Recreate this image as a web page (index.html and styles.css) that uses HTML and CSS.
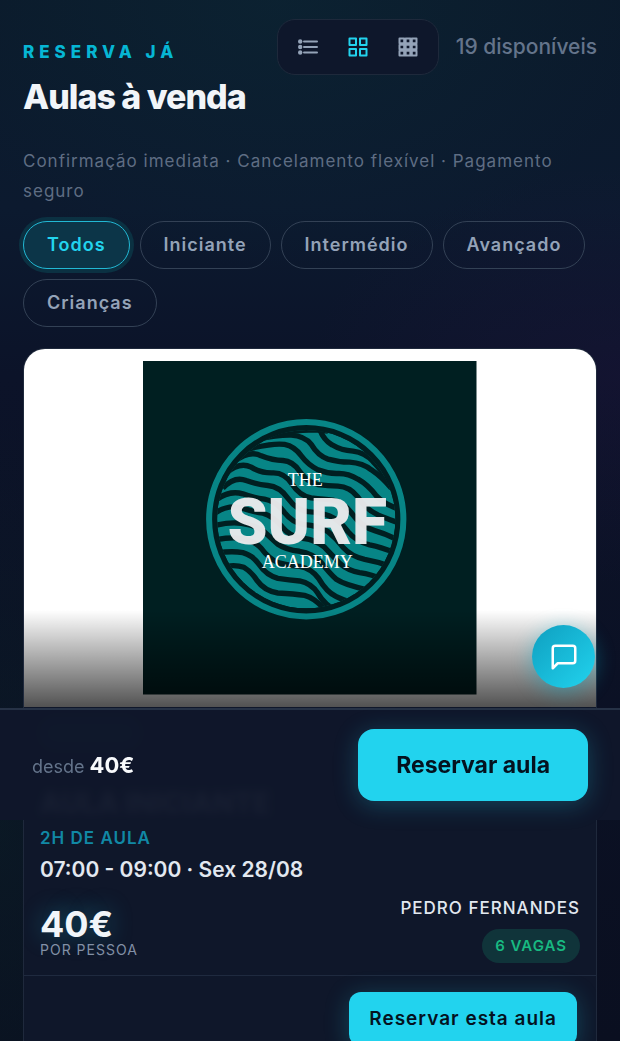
FILE: index.html
```html
<!DOCTYPE html>
<html lang="pt">
<head>
<meta charset="utf-8">
<meta name="viewport" content="width=device-width, initial-scale=1">
<title>Aulas à venda</title>
<link rel="stylesheet" href="styles.css">
</head>
<body>
<main class="page">
  <header class="header">
    <div class="heading">
      <p class="eyebrow">Reserva já</p>
      <h1 class="title">Aulas à venda</h1>
    </div>
    <div class="tools">
      <div class="views" role="group" aria-label="Vista">
        <button class="view" type="button" aria-label="Lista">
          <svg width="20" height="20" viewBox="0 0 20 20" fill="none" stroke="currentColor" stroke-width="2" stroke-linecap="round"><path d="M6 4.500h13M6 10h13M6 15.500h13"/><g fill="currentColor" stroke="none"><circle cx="2.200" cy="4.500" r="2.200"/><circle cx="2.200" cy="10" r="2.200"/><circle cx="2.200" cy="15.500" r="2.200"/></g></svg>
        </button>
        <button class="view view-active" type="button" aria-label="Grelha" aria-pressed="true">
          <svg width="20" height="20" viewBox="0 0 20 20" fill="none" stroke="currentColor" stroke-width="2" stroke-linejoin="round"><path d="M1.500 1.500h6.500v6.500h-6.500zM12 1.500h6.500v6.500h-6.500zM1.500 12h6.500v6.500h-6.500zM12 12h6.500v6.500h-6.500z"/></svg>
        </button>
        <button class="view" type="button" aria-label="Compacta">
          <svg width="20" height="20" viewBox="0 0 20 20" fill="none" stroke="currentColor" stroke-width="2" stroke-linejoin="round"><path d="M1.500 1.500h4.700v4.700h-4.700zM7.650 1.500h4.700v4.700h-4.700zM13.800 1.500h4.700v4.700h-4.700zM1.500 7.650h4.700v4.700h-4.700zM7.650 7.650h4.700v4.700h-4.700zM13.800 7.650h4.700v4.700h-4.700zM1.500 13.800h4.700v4.700h-4.700zM7.650 13.800h4.700v4.700h-4.700zM13.800 13.800h4.700v4.700h-4.700z"/></svg>
        </button>
      </div>
      <span class="count">19 disponíveis</span>
    </div>
  </header>
  <p class="lead">Confirmação imediata · Cancelamento flexível · Pagamento seguro</p>
  <div class="chips" role="group" aria-label="Nível">
    <button class="chip chip-active" type="button" aria-pressed="true">Todos</button>
    <button class="chip" type="button">Iniciante</button>
    <button class="chip" type="button">Intermédio</button>
    <button class="chip" type="button">Avançado</button>
    <button class="chip" type="button">Crianças</button>
  </div>
  <article class="card">
    <div class="cover">
      <svg class="logo" viewBox="0 0 333 333" role="img" aria-label="The Surf Academy">
        <defs>
          <clipPath id="disc"><circle cx="335" cy="328" r="267"/></clipPath>
        </defs>
        <rect width="333" height="333" fill="#001f21"/>
        <g transform="translate(163 158)">
          <circle r="97" fill="none" stroke="#078586" stroke-width="6"/>
          <g transform="scale(.3333) translate(-335 -328)" clip-path="url(#disc)">
            <circle cx="335" cy="328" r="267" fill="#078586"/>
            <g fill="none" stroke="#001f21" stroke-width="16">
              <path d="M200 82Q230 72 280 66Q325 60 362 60Q385 62 400 64"/>
              <path d="M372 50Q385 90 412 105Q440 122 475 124Q510 128 535 155Q560 180 590 225"/>
              <path d="M190 88Q250 75 290 76Q330 78 350 104Q370 138 400 148Q430 157 465 157Q505 160 530 180Q560 200 590 235"/>
              <path d="M150 120Q240 98 270 104Q300 110 320 138Q340 165 370 180Q400 192 430 191Q460 190 490 208Q520 225 545 258Q570 285 620 300"/>
              <path d="M120 155Q165 120 200 138Q235 152 265 152Q295 154 315 184Q335 215 370 224Q400 228 430 229Q465 230 490 262Q515 300 550 315Q575 325 620 342"/>
              <path d="M95 190Q135 155 170 172Q200 190 235 189Q270 188 292 222Q315 258 350 264Q390 268 415 271Q450 280 475 315Q500 350 540 362Q575 372 610 390"/>
              <path d="M85 235Q120 198 155 212Q190 225 220 227Q255 230 280 265Q305 300 340 305Q380 308 405 318Q435 330 460 365Q485 395 525 405Q560 412 610 432"/>
              <path d="M65 270Q105 240 145 252Q180 265 210 268Q245 274 270 308Q295 340 330 344Q370 347 400 365Q425 385 445 412Q470 440 510 448Q550 455 590 470"/>
              <path d="M50 318Q95 282 140 294Q175 305 205 310Q235 318 262 350Q285 380 325 385Q365 390 390 412Q415 438 435 460Q460 482 495 488Q530 493 570 510"/>
              <path d="M50 350Q100 335 140 340Q180 345 205 362Q230 385 250 403Q275 420 315 424Q355 430 380 458Q405 490 425 508Q450 525 520 540"/>
              <path d="M50 392Q105 380 145 386Q180 393 200 415Q222 445 250 458Q280 467 315 469Q350 475 372 505Q395 545 425 560Q445 570 480 580"/>
              <path d="M60 430Q110 422 145 428Q175 436 195 465Q215 495 250 505Q285 510 315 513Q350 520 370 550Q390 585 430 605"/>
              <path d="M80 472Q120 462 148 472Q170 485 188 512Q210 543 250 549Q300 552 330 556Q365 565 400 610"/>
            </g>
          </g>
          <g text-anchor="middle">
            <text class="logo-small" x="-1" y="-33">THE</text>
            <text class="logo-big" x="1" y="25">SURF</text>
            <text class="logo-small" x="1" y="49">ACADEMY</text>
          </g>
        </g>
      </svg>
    </div>
    <div class="body">
      <div class="tags"><span class="tag"></span></div>
      <h2 class="name">Aula iniciante</h2>
      <p class="length">2h de aula</p>
      <p class="time">07:00 - 09:00 · Sex 28/08</p>
      <div class="details">
        <div>
          <p class="price">40€</p>
          <p class="unit">por pessoa</p>
        </div>
        <div class="coach">
          <p class="coach-name">Pedro Fernandes</p>
          <span class="spots">6 vagas</span>
        </div>
      </div>
    </div>
    <footer class="actions">
      <button class="book" type="button">Reservar esta aula</button>
    </footer>
  </article>
</main>
<button class="chat" type="button" aria-label="Abrir conversa">
  <svg width="30" height="30" viewBox="0 0 24 24" fill="none" stroke="currentColor" stroke-width="2" stroke-linecap="round" stroke-linejoin="round"><path d="M21 15a2 2 0 0 1-2 2H7l-4 4V5a2 2 0 0 1 2-2h14a2 2 0 0 1 2 2z"/></svg>
</button>
<aside class="bar">
  <p class="from">desde <strong class="from-price">40€</strong></p>
  <button class="reserve" type="button">Reservar aula</button>
</aside>
</body>
</html>
```
FILE: styles.css
```css
* { box-sizing: border-box; }
body, h1, h2, p { margin: 0; }
button { font: inherit; cursor: pointer; }

body {
  height: 100vh;
  overflow: hidden;
  font-family: Inter, "Liberation Sans", sans-serif;
  color: #f1f5f9;
  background:
    radial-gradient(ellipse 60% 26% at 45% 0, rgba(12, 45, 58, .4), transparent),
    radial-gradient(ellipse 50% 20% at 100% 36%, rgba(26, 20, 56, .5), transparent),
    radial-gradient(ellipse 30% 40% at 0 80%, rgba(10, 32, 38, .5), transparent),
    linear-gradient(#0b1a2b, #0c1a2f 20%, #0c1329 36%, #0a0f20);
}

.page { padding: 19px 23px; }

.header { display: flex; justify-content: space-between; align-items: flex-start; }
.heading { padding-top: 22px; }
.eyebrow {
  font-size: 17px;
  line-height: 22px;
  font-weight: 800;
  letter-spacing: 5px;
  text-transform: uppercase;
  color: #06b6d4;
}
.title {
  margin-top: 12px;
  font-size: 34px;
  line-height: 44px;
  font-weight: 800;
  letter-spacing: -1px;
}
.tools { display: flex; align-items: center; gap: 17px; }
.views {
  display: flex;
  padding: 5px;
  border: 1px solid #1e293b;
  border-radius: 18px;
  background: #0e172b;
}
.view {
  display: grid;
  place-items: center;
  width: 50px;
  height: 44px;
  padding: 0;
  border: 0;
  background: none;
  color: #94a3b8;
}
.view-active { color: #22d3ee; }
.count { font-size: 21px; line-height: 24px; font-weight: 500; color: #64748b; white-space: nowrap; }

.lead {
  margin-top: 27px;
  font-size: 17px;
  line-height: 30px;
  letter-spacing: 1px;
  color: #5f6d83;
}

.chips { display: flex; flex-wrap: wrap; gap: 10px; margin-top: 15px; }
.chip {
  padding: 0 23px;
  border: 1px solid #334155;
  border-radius: 25px;
  background: none;
  font-size: 18px;
  line-height: 46px;
  font-weight: 600;
  letter-spacing: 1px;
  color: #94a3b8;
}
.chip-active {
  border-color: #22b8d4;
  background: #0c3548;
  box-shadow: 0 0 0 4px #0b3142;
  color: #22d3ee;
}

.card {
  margin-top: 21px;
  border: 1px solid #1f293c;
  border-radius: 22px;
  background: #0f172a;
  overflow: hidden;
}
.cover {
  position: relative;
  display: flex;
  justify-content: center;
  aspect-ratio: 8 / 5;
  padding: 12px;
  background: #fff;
}
.cover::after {
  content: "";
  position: absolute;
  inset: 73% 0 0;
  background: linear-gradient(transparent, rgba(0, 0, 0, .68));
}
.logo { height: 100%; }
.logo-small { font: 18px "Liberation Serif", serif; fill: #fff; }
.logo-big { font: 900 64px Roboto, sans-serif; fill: #ebebed; fill-opacity: .96; }

.body { padding: 10px 16px 12px; }
.tags { height: 32px; }
.tag { display: block; width: 100px; height: 32px; border-radius: 16px; background: #0d3a4b; }
.name {
  margin-top: 38px;
  font-size: 28px;
  line-height: 32px;
  font-weight: 800;
  text-transform: uppercase;
}
.length {
  margin-top: 8px;
  font-size: 17px;
  line-height: 22px;
  font-weight: 600;
  letter-spacing: 1px;
  text-transform: uppercase;
  color: #1188a5;
}
.time { margin-top: 8px; font-size: 21px; line-height: 26px; font-weight: 600; color: #e2e8f0; }
.details { display: flex; justify-content: space-between; align-items: flex-end; margin-top: 14px; }
.price {
  font-size: 36px;
  line-height: 34px;
  font-weight: 700;
  text-shadow: 0 0 24px rgba(34, 211, 238, .35);
}
.unit {
  margin-bottom: 4px;
  font-size: 14px;
  line-height: 18px;
  letter-spacing: 1px;
  text-transform: uppercase;
  color: #8290a6;
}
.coach { display: flex; flex-direction: column; align-items: flex-end; gap: 10px; }
.coach-name {
  font-size: 17px;
  line-height: 22px;
  font-weight: 500;
  letter-spacing: 1px;
  text-transform: uppercase;
  color: #e2e8f0;
}
.spots {
  padding: 0 13px;
  border-radius: 17px;
  background: #10343a;
  font-size: 15px;
  line-height: 34px;
  font-weight: 600;
  letter-spacing: 1px;
  text-transform: uppercase;
  color: #18b981;
}
.actions { display: flex; justify-content: flex-end; padding: 16px 19px; border-top: 1px solid #1f2a3f; }
.book, .reserve { border: 0; background: #22d3ee; color: #04121f; box-shadow: 0 4px 24px rgba(34, 211, 238, .25); }
.book {
  padding: 0 20px;
  border-radius: 12px;
  font-size: 19px;
  line-height: 54px;
  font-weight: 600;
  letter-spacing: 1px;
}

.chat {
  position: fixed;
  right: 25px;
  bottom: 353px;
  display: grid;
  place-items: center;
  width: 63px;
  height: 63px;
  padding: 0;
  border: 0;
  border-radius: 50%;
  background: linear-gradient(135deg, #0e9fc0, #22d3ee);
  box-shadow: 0 4px 20px rgba(6, 182, 212, .4);
  color: #fff;
}

.bar {
  position: fixed;
  left: 0;
  right: 0;
  bottom: 221px;
  display: flex;
  justify-content: space-between;
  align-items: center;
  padding: 19px 32px;
  border-top: 2px solid #263246;
  background: rgba(15, 23, 42, .97);
  backdrop-filter: blur(4px);
}
.from { font-size: 18px; color: #64748b; }
.from-price { font-size: 22px; font-weight: 700; color: #f8fafc; }
.reserve { padding: 0 38px; border-radius: 16px; font-size: 23px; line-height: 72px; font-weight: 700; }
```
